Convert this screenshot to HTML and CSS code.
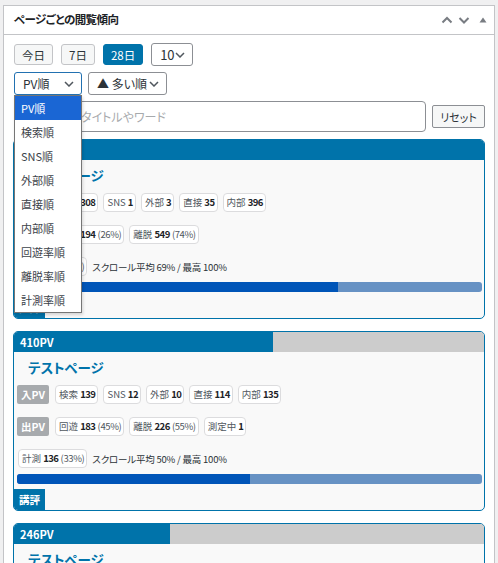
FILE: index.html
```html
<!DOCTYPE html>
<html lang="ja">
<head>
<meta charset="utf-8">
<link rel="stylesheet" href="styles.css">
</head>
<body>
<div class="postbox">
  <div class="pb-head">
    <h2 class="pb-title">ページごとの閲覧傾向</h2>
    <div class="pb-actions">
      <svg class="hicon" width="14" height="10" viewBox="0 0 14 10"><path d="M2.5 7.5l4.5-4.5 4.5 4.5" fill="none" stroke="#787c82" stroke-width="2"/></svg>
      <svg class="hicon" width="14" height="10" viewBox="0 0 14 10"><path d="M2.5 3l4.5 4.5 4.5-4.5" fill="none" stroke="#787c82" stroke-width="2"/></svg>
      <svg class="hicon tri" width="10" height="10" viewBox="0 0 10 10"><path d="M1.5 7.5L5 2.5 8.5 7.5z" fill="#787c82"/></svg>
    </div>
  </div>
  <div class="pb-body">
    <div class="row r1">
      <span class="btn">今日</span>
      <span class="btn">7日</span>
      <span class="btn active">28日</span>
      <span class="sel sel-num"><span>10</span><svg width="10" height="6" viewBox="0 0 10 6"><path d="M1 1l4 4 4-4" fill="none" stroke="#50575e" stroke-width="1.5"/></svg></span>
    </div>
    <div class="row r2">
      <span class="sel sel-order focus"><span>PV順</span><svg width="10" height="6" viewBox="0 0 10 6"><path d="M1 1l4 4 4-4" fill="none" stroke="#50575e" stroke-width="1.5"/></svg></span>
      <span class="sel sel-dir"><span>▲ 多い順</span><svg width="10" height="6" viewBox="0 0 10 6"><path d="M1 1l4 4 4-4" fill="none" stroke="#50575e" stroke-width="1.5"/></svg></span>
    </div>
    <div class="row r3">
      <span class="search">ページのタイトルやワード</span>
      <span class="btn reset">リセット</span>
    </div>

    <div class="card">
      <div class="card-head"><div class="fill" style="width:100%"></div><span class="pv">743PV</span></div>
      <div class="title">テストページ</div>
      <div class="trow first">
        <span class="lbl">入PV</span>
        <span class="tag">検索 <b>308</b></span>
        <span class="tag">SNS <b>1</b></span>
        <span class="tag">外部 <b>3</b></span>
        <span class="tag">直接 <b>35</b></span>
        <span class="tag">内部 <b>396</b></span>
      </div>
      <div class="trow">
        <span class="lbl">出PV</span>
        <span class="tag">回遊 <b>194</b> <i>(26%)</i></span>
        <span class="tag">離脱 <b>549</b> <i>(74%)</i></span>
      </div>
      <div class="trow mrow">
        <span class="tag">計測 <b>246</b> <i>(33%)</i></span>
        <span class="scroll">スクロール平均 69% / 最高 100%</span>
      </div>
      <div class="bar"><div class="bar-fill" style="width:69%"></div></div>
      <div class="foot"><span class="review">講評</span></div>
    </div>

    <div class="card">
      <div class="card-head"><div class="fill" style="width:55.2%"></div><span class="pv">410PV</span></div>
      <div class="title">テストページ</div>
      <div class="trow first">
        <span class="lbl">入PV</span>
        <span class="tag">検索 <b>139</b></span>
        <span class="tag">SNS <b>12</b></span>
        <span class="tag">外部 <b>10</b></span>
        <span class="tag">直接 <b>114</b></span>
        <span class="tag">内部 <b>135</b></span>
      </div>
      <div class="trow">
        <span class="lbl">出PV</span>
        <span class="tag">回遊 <b>183</b> <i>(45%)</i></span>
        <span class="tag">離脱 <b>226</b> <i>(55%)</i></span>
        <span class="tag">測定中 <b>1</b></span>
      </div>
      <div class="trow mrow">
        <span class="tag">計測 <b>136</b> <i>(33%)</i></span>
        <span class="scroll">スクロール平均 50% / 最高 100%</span>
      </div>
      <div class="bar"><div class="bar-fill" style="width:50%"></div></div>
      <div class="foot"><span class="review">講評</span></div>
    </div>

    <div class="card">
      <div class="card-head"><div class="fill" style="width:33.1%"></div><span class="pv">246PV</span></div>
      <div class="title">テストページ</div>
      <div class="trow first">
        <span class="lbl">入PV</span>
        <span class="tag">検索 <b>88</b></span>
        <span class="tag">SNS <b>4</b></span>
        <span class="tag">外部 <b>6</b></span>
        <span class="tag">直接 <b>72</b></span>
        <span class="tag">内部 <b>76</b></span>
      </div>
    </div>

    <div class="dropdown">
      <div class="opt selected">PV順</div>
      <div class="opt">検索順</div>
      <div class="opt">SNS順</div>
      <div class="opt">外部順</div>
      <div class="opt">直接順</div>
      <div class="opt">内部順</div>
      <div class="opt">回遊率順</div>
      <div class="opt">離脱率順</div>
      <div class="opt">計測率順</div>
    </div>
  </div>
</div>
</body>
</html>
```

FILE: styles.css
```css
html, body {
  margin: 0;
  height: 563px;
  overflow: hidden;
}
body {
  background: #f0f0f1;
  font-family: "Noto Sans CJK JP", "Noto Sans", sans-serif;
  font-feature-settings: "palt";
  color: #1d2327;
}
.postbox {
  margin: 5px 3px 0 3px;
  background: #fff;
  border: 1px solid #c3c4c7;
  border-bottom: none;
  height: 700px;
}
.pb-head {
  height: 28px;
  display: flex;
  align-items: center;
  justify-content: space-between;
  padding: 0 6px 0 10px;
  border-bottom: 1px solid #c3c4c7;
}
.pb-title {
  margin: 0;
  font-size: 11.5px;
  font-weight: 700;
  letter-spacing: -0.6px;
  line-height: 1;
}
.pb-actions {
  display: flex;
  align-items: center;
  gap: 3px;
}
.hicon { display: block; }
.hicon.tri { margin-left: 4px; }
.pb-body {
  position: relative;
  padding: 8px 9px 0 9px;
}
.row {
  display: flex;
  align-items: center;
  margin-left: 1px;
}
.r1 { height: 23px; gap: 8px; }
.r2 { height: 23px; gap: 6px; margin-top: 6px; }
.r3 { height: 31px; gap: 6px; margin-top: 6px; }
.btn {
  box-sizing: border-box;
  height: 21px;
  padding: 0 7px;
  display: inline-flex;
  align-items: center;
  background: #f6f7f7;
  border: 1px solid #c3c4c7;
  border-radius: 3px;
  font-size: 11.5px;
  color: #2c3338;
}
.btn.active {
  background: #0073aa;
  border-color: #0073aa;
  color: #fff;
}
.sel {
  box-sizing: border-box;
  height: 23px;
  display: inline-flex;
  align-items: center;
  justify-content: space-between;
  background: #fff;
  border: 1px solid #8c8f94;
  border-radius: 3px;
  padding: 0 7px 0 8px;
  font-size: 12px;
  color: #2c3338;
}
.sel svg { display: block; }
.sel-num { width: 42px; font-size: 13px; }
.sel-order { width: 68px; }
.sel-order.focus { border-color: #2271b1; }
.sel-dir { width: 79px; }
.search {
  box-sizing: border-box;
  width: 412px;
  height: 31px;
  border: 1px solid #8c8f94;
  border-radius: 4px;
  background: #fff;
  display: flex;
  align-items: center;
  padding-left: 19px;
  font-size: 12px;
  color: #a7aaad;
}
.btn.reset {
  height: 23px;
  width: 53px;
  justify-content: center;
  padding: 0;
  border-color: #8c8f94;
  border-radius: 2px;
  font-size: 11px;
}
.card {
  background: #f9f9f9;
  border: 1px solid #0073aa;
  border-radius: 5px;
  overflow: hidden;
  margin-top: 12px;
}
.r3 + .card { margin-top: 7px; }
.card-head {
  position: relative;
  height: 20px;
  background: #cccccc;
}
.card-head .fill {
  position: absolute;
  left: 0;
  top: 0;
  bottom: 0;
  background: #0073aa;
}
.card-head .pv {
  position: relative;
  display: block;
  padding-left: 6px;
  line-height: 20px;
  font-size: 11px;
  font-weight: 700;
  color: #fff;
}
.title {
  padding: 4px 0 0 14px;
  height: 22px;
  line-height: 22px;
  font-size: 13.5px;
  font-weight: 700;
  color: #0073aa;
}
.trow {
  display: flex;
  align-items: center;
  gap: 5px;
  margin-top: 13px;
  padding-left: 3px;
  height: 19px;
}
.trow.first { margin-top: 7px; }
.lbl {
  box-sizing: border-box;
  width: 32px;
  height: 19px;
  display: inline-flex;
  align-items: center;
  justify-content: center;
  background: #a7aaad;
  border-radius: 2px;
  color: #fff;
  font-size: 10.5px;
  font-weight: 700;
  margin-right: 1px;
}
.tag {
  box-sizing: border-box;
  height: 19px;
  display: inline-block;
  line-height: 17px;
  padding: 0 2px 0 3px;
  background: #fff;
  border: 1px solid #dcdcde;
  border-radius: 4px;
  font-size: 9.5px;
  color: #50575e;
  white-space: nowrap;
}
.tag b {
  font-weight: 700;
  color: #1d2327;
  letter-spacing: -0.5px;
}
.tag i {
  font-style: normal;
  font-size: 9.5px;
  letter-spacing: -0.4px;
}
.mrow { padding-left: 4px; }
.scroll {
  font-size: 9.5px;
  color: #2c3338;
  letter-spacing: -0.2px;
}
.bar {
  margin: 6px 2px 0 3px;
  height: 10px;
  border-radius: 3px;
  background: #6792c4;
  overflow: hidden;
}
.bar-fill {
  height: 100%;
  background: #0055b8;
}
.foot {
  margin-top: 5px;
  height: 21px;
  display: flex;
}
.review {
  width: 31px;
  height: 21px;
  display: inline-flex;
  align-items: center;
  justify-content: center;
  background: #0073aa;
  color: #fff;
  font-size: 10.5px;
  font-weight: 700;
}
.dropdown {
  position: absolute;
  left: 10px;
  top: 60px;
  width: 68px;
  box-sizing: border-box;
  background: #fff;
  border: 1px solid #767676;
  box-shadow: 1px 2px 3px rgba(0, 0, 0, 0.15);
}
.opt {
  height: 24px;
  line-height: 24px;
  padding-left: 6px;
  font-size: 11px;
  color: #3c434a;
}
.opt.selected {
  background: #1a66d4;
  color: #fff;
}
```
